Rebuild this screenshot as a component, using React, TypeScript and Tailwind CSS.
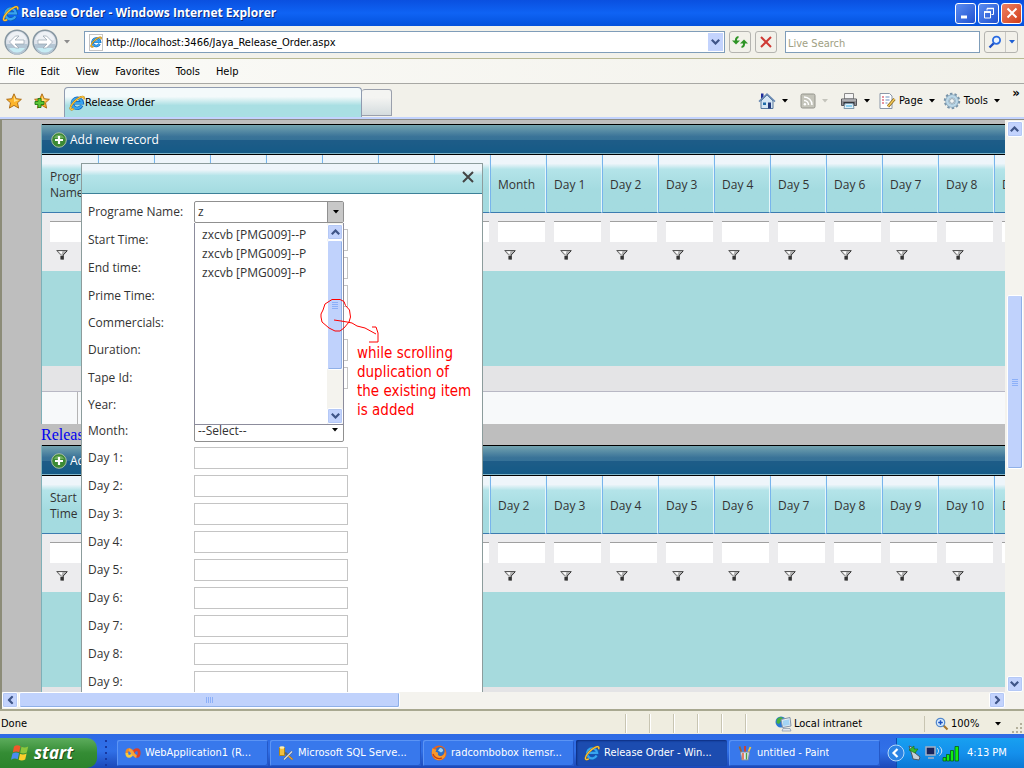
import { useState } from "react";
import type { ReactNode } from "react";
import { clsx } from "clsx";

const MENUS = ["File", "Edit", "View", "Favorites", "Tools", "Help"];

const DAYS = [1, 2, 3, 4, 5, 6, 7, 8, 9, 10, 11].map(n => `Day ${n}`);

const PROGRAM_COLUMNS = [
  "Programe Name", "Start Time", "End time", "Prime Time", "Comm.", "Dur.", "Tape Id", "Year", "Month",
  ...DAYS.slice(0, 9),
];

const RELEASE_COLUMNS = [
  "Start Time", "End time", "Prime Time", "Comm.", "Dur.", "Year", "Month",
  ...DAYS,
];

const ITEMS = ["zxcvb [PMG009]--P", "zxcvb [PMG009]--P", "zxcvb [PMG009]--P"];

type Kind = "combo" | "select" | "text";

const FIELDS: { label: string; kind: Kind }[] = [
  { label: "Programe Name", kind: "combo" },
  { label: "Start Time", kind: "text" },
  { label: "End time", kind: "text" },
  { label: "Prime Time", kind: "text" },
  { label: "Commercials", kind: "select" },
  { label: "Duration", kind: "text" },
  { label: "Tape Id", kind: "text" },
  { label: "Year", kind: "select" },
  { label: "Month", kind: "select" },
  ...DAYS.slice(0, 9).map(label => ({ label, kind: "text" as Kind })),
];

/* ── Icons ── */

function IeIcon({ className = "size-4" }: { className?: string }) {
  return (
    <svg viewBox="0 0 16 16" className={clsx("shrink-0", className)} fill="none">
      <path d="M12.8 10.6a5 5 0 1 1 .5-2.9H5" stroke="#0b5fb8" strokeWidth="3.4" />
      <path d="M12.6 10.6a5 5 0 1 1 .5-2.7H5" stroke="#38a4ee" strokeWidth="2.2" />
      <path d="M14.6 4.2c.8-2.2-.4-3.4-3.2-2C7 4.2 1.8 9.6 1.4 13c-.2 1.8 1.4 2 3.4.8" stroke="#a8740c" strokeWidth="1.9" />
      <path d="M14.6 4.2c.8-2.2-.4-3.4-3.2-2C7 4.2 1.8 9.6 1.4 13c-.2 1.8 1.4 2 3.4.8" stroke="#fbc43c" strokeWidth="1.2" />
    </svg>
  );
}

function Caret({ className = "text-black" }: { className?: string }) {
  return (
    <svg viewBox="0 0 6 4" className={clsx("h-1 w-1.5 shrink-0", className)} fill="currentColor">
      <path d="M0 0h6L3 3.5z" />
    </svg>
  );
}

function Chevron({ dir }: { dir: "up" | "down" | "left" | "right" }) {
  const turn = { up: "", down: "rotate-180", left: "-rotate-90", right: "rotate-90" }[dir];
  return (
    <svg viewBox="0 0 9 6" className={clsx("h-1.5 w-[9px]", turn)} fill="none" stroke="#3f5588" strokeWidth="2.2">
      <path d="M.8 5.2 4.5 1.5l3.7 3.7" />
    </svg>
  );
}

function Funnel() {
  return (
    <svg viewBox="0 0 12 10" className="h-2.5 w-3">
      <path d="M.5.5h11L7.5 4.8V9.500h-3V4.8z" fill="#b0b0b0" />
      <path d="M.5.5h11" stroke="#555" />
      <path d="M11 1 7.200 5v4.500" fill="none" stroke="#333" />
      <path d="M1 1l3.500 3.800" fill="none" stroke="#777" />
      <path d="M4.500 6h3v3.500h-3z" fill="#333" />
      <path d="M2.500 1.200h4L5.500 4.500z" fill="#fff" />
    </svg>
  );
}

function PlusCircle() {
  return (
    <svg viewBox="0 0 16 16" className="size-4">
      <circle cx="8" cy="8" r="7.3" fill="#3c8a34" stroke="#a9bfa4" />
      <path d="M3 6a5.500 5.500 0 0 1 10 0z" fill="#6fae5e" />
      <path d="M8 4v8M4 8h8" stroke="#fff" strokeWidth="2.2" />
    </svg>
  );
}

const STAR = "M8 .8l2.2 4.900 5.200.6-3.900 3.500 1.100 5.300L8 12.400l-4.600 2.700 1.100-5.300L.6 6.300l5.200-.6z";

function StarIcon({ plus = false }: { plus?: boolean }) {
  return (
    <svg viewBox="0 0 16 16" className="size-4">
      <path d={STAR} fill="#fdb52a" stroke="#a8650f" strokeWidth=".9" />
      <path d="M8 2.8l1.500 3.600 3.500.5L8 9z" fill="#ffe08a" />
      {plus && <path d="M4 5.5h3v3h3v3H7v3H4v-3H1v-3h3z" fill="#5cc736" stroke="#1f7a16" strokeWidth=".9" />}
    </svg>
  );
}

function ArrowDisc({ flip = false }: { flip?: boolean }) {
  return (
    <svg viewBox="0 0 26 26" className={clsx("size-[26px]", flip && "-scale-x-100")}>
      <circle cx="13" cy="13" r="11.8" fill="#dde2ea" stroke="#8797a2" strokeWidth="1.600" />
      <path d="M2.5 15a10.500 10.500 0 0 0 21 0z" fill="#b4c6d4" />
      <path d="M5 19a9.500 9.500 0 0 0 16 0z" fill="#c6ecf4" />
      <path d="M3.500 11a9.600 9.600 0 0 1 19 0z" fill="#eef1f5" />
      <path d="M5.500 13l6-6H15l-4 4h9v4h-9l4 4h-3.500z" fill="#fff" stroke="#93a1ad" strokeWidth=".7" />
    </svg>
  );
}

function HouseIcon() {
  return (
    <svg viewBox="0 0 18 18" className="size-[18px]">
      <path d="M3 1.500h2.500V6L3 8z" fill="#1c2c9c" />
      <path d="M3 9l6-6 6 6v7.500H3z" fill="#d5e6f4" stroke="#55779c" />
      <path d="M1 9.700 9 2l8 7.700" fill="none" stroke="#6c8cb4" strokeWidth="1.600" />
      <path d="M10 10.500h3v6h-3z" fill="#223a7c" />
      <path d="M5 10.500h3v2.500H5z" fill="#1f6ba8" />
    </svg>
  );
}

function RssIcon() {
  return (
    <svg viewBox="0 0 16 16" className="size-4" fill="none">
      <rect x="1" y="1" width="14" height="14" rx="1.500" fill="#c4c4ba" stroke="#94948c" />
      <path d="M4 4c4.500 0 8 3.500 8 8M4 7.500A4.500 4.500 0 0 1 8.500 12" stroke="#fff" strokeWidth="1.500" />
      <circle cx="4.900" cy="11.200" r="1.200" fill="#fff" />
    </svg>
  );
}

function PrinterIcon() {
  return (
    <svg viewBox="0 0 18 18" className="size-[18px]">
      <path d="M4.500 1.500h9V7h-9z" fill="#f4f4f4" stroke="#8a8a8a" />
      <path d="M1.500 7h15v6.500h-15z" fill="#8f9094" stroke="#55565a" />
      <path d="M2 8h14" stroke="#cfcfd2" />
      <path d="M3.500 10h11v3h-11z" fill="#34363c" />
      <path d="M5 11.500h8l1 5H4z" fill="#dff0fa" stroke="#7d99ab" />
      <path d="M6 13.500h6v1H6z" fill="#37b0e4" />
    </svg>
  );
}

function PageIcon() {
  return (
    <svg viewBox="0 0 18 18" className="size-[18px]" fill="none">
      <path d="M2 1.500h9.500L14 4v12.500H2z" fill="#fff" stroke="#8a97a8" />
      <path d="M4 5h2M4 8h2M4 11h2" stroke="#e07080" strokeWidth="1.500" />
      <path d="M7.500 5h4M7.500 8h4M7.500 11h2" stroke="#6b8fbf" />
      <path d="M16.500 7 10 14.500" stroke="#7c5a10" strokeWidth="2.800" />
      <path d="M16.500 7 10 14.500" stroke="#f4c95a" strokeWidth="1.600" />
    </svg>
  );
}

function GearIcon() {
  return (
    <svg viewBox="0 0 18 18" className="size-[18px]" fill="none">
      <circle cx="9" cy="9" r="7" stroke="#7893a8" strokeWidth="2.400" strokeDasharray="2.400 2" />
      <circle cx="9" cy="9" r="4.800" stroke="#8aa8bc" strokeWidth="3.800" />
      <circle cx="9" cy="9" r="4.800" stroke="#bcd8e8" strokeWidth="2.400" />
      <circle cx="9" cy="9" r="2.400" fill="#f4f6f4" stroke="#7893a8" strokeWidth=".8" />
    </svg>
  );
}

function MagnifierIcon({ plus = false }: { plus?: boolean }) {
  return plus ? (
    <svg viewBox="0 0 14 14" className="size-3.5" fill="none">
      <path d="M8.500 8.500l4 4" stroke="#a8762c" strokeWidth="2.200" />
      <circle cx="5.500" cy="5.500" r="4.200" fill="#dcefff" stroke="#5388cc" strokeWidth="1.300" />
      <path d="M5.500 3.200v4.600M3.200 5.500h4.600" stroke="#1a4fc0" strokeWidth="1.500" />
    </svg>
  ) : (
    <svg viewBox="0 0 14 14" className="size-3.5" fill="none">
      <path d="M6 8l-4.500 4.500" stroke="#1d4fc4" strokeWidth="2.400" />
      <circle cx="8.500" cy="5.200" r="3.600" fill="#eaf4ff" stroke="#2a6be0" strokeWidth="1.800" />
    </svg>
  );
}

function WindowsFlag() {
  return (
    <svg viewBox="0 0 20 20" className="size-5">
      <path d="M4 3.500C6 2 8.500 2 10.500 3.200L9.200 9.200C7 8 5 8.200 2.800 9.500z" fill="#f0582a" />
      <path d="M11.500 3.700c2 1 4.200 1 6.700-.3l-1.400 6c-2.300 1.300-4.500 1.200-6.600.3z" fill="#8cc63c" />
      <path d="M2.500 10.600c2.200-1.300 4.300-1.400 6.500-.3l-1.300 6C5.500 15.200 3.400 15.400 1 16.700z" fill="#4a8cf0" />
      <path d="M10 10.800c2 1 4.200 1 6.600-.3l-1.400 6c-2.300 1.300-4.500 1.200-6.500.3z" fill="#fbce2c" />
    </svg>
  );
}

function StudioIcon() {
  return (
    <svg viewBox="0 0 16 16" className="size-4" fill="none" strokeWidth="2.800">
      <path d="M8 8c2.200 4.500 6.200 4.500 6.200 0S10.200 3.500 8 8" stroke="#d8402c" />
      <path d="M1.800 8c0-4.500 4-4.500 6.200 0" stroke="#f08a24" />
      <path d="M1.800 8c0 4.500 4 4.500 6.200 0" stroke="#f7cb3c" />
      <path d="M4 4.500c2 .5 4.500 6.500 7.500 7" stroke="#f6a43c" />
    </svg>
  );
}

function SqlIcon() {
  return (
    <svg viewBox="0 0 16 16" className="size-4" fill="none">
      <path d="M1.500 2.500h5v8h-5z" fill="#f4c13c" stroke="#b0851c" />
      <ellipse cx="4" cy="2.500" rx="2.500" ry="1.300" fill="#fff0b0" />
      <path d="M6 14.500l8-8M7 7.500l7.500 7" stroke="#5c6470" strokeWidth="2.200" />
      <path d="M6 14.500l8-8" stroke="#dfe4ea" strokeWidth="1.100" />
      <path d="M10.500 11l4 3.500" stroke="#e8a02c" strokeWidth="1.500" />
    </svg>
  );
}

function FirefoxIcon() {
  return (
    <svg viewBox="0 0 16 16" className="size-4">
      <circle cx="8" cy="8" r="7.500" fill="#e4641c" />
      <circle cx="9" cy="6.500" r="4.600" fill="#2b6fc8" />
      <path d="M9 3c2 0 3 1 3.200 3L10 7.500 7 5.500z" fill="#9ed4f4" />
      <path d="M1.500 3c1 1.500 2.500 1.500 4 1.500L4.500 7c1.500 0 3 .5 2.500 1.800C6.500 10 8 11.500 10.500 11c2-.4 3.300-2.500 3.500-5 2 4.500-1 9-6 9S-.5 9.500 1.500 3z" fill="#f7992c" />
      <path d="M2 9c1 3.500 5 5.500 9 4" fill="none" stroke="#c43c14" strokeWidth="1.200" />
    </svg>
  );
}

function PaintIcon() {
  return (
    <svg viewBox="0 0 16 16" className="size-4" fill="none">
      <path d="M5 9 2.500 1.500" stroke="#a0622c" strokeWidth="1.800" />
      <path d="M8 9V1" stroke="#d83c2c" strokeWidth="1.800" />
      <path d="M10.500 9l3-7" stroke="#f4c83c" strokeWidth="1.800" />
      <path d="M3.500 7h9l-1.200 8h-6.600z" fill="#e0e4ee" stroke="#7888a4" />
      <path d="M6 8v6.500" stroke="#e0542c" strokeWidth="1.400" />
      <path d="M9.500 8v6.500" stroke="#48a444" strokeWidth="1.400" />
    </svg>
  );
}

function IntranetIcon() {
  return (
    <svg viewBox="0 0 17 16" className="h-4 w-[17px]">
      <circle cx="6" cy="6" r="5.500" fill="#2a78d4" />
      <path d="M2 3c2-2.500 5-2 6-1L6 5 4 8 1.500 7z" fill="#48b03c" />
      <path d="M6 3.500 15 1.500l1 8.500-8.500 1.500z" fill="#e8eef4" stroke="#8494a8" />
      <path d="M7.500 4.700l6.500-1.400.8 5.700-6.500 1z" fill="#a4d4f4" />
      <path d="M8 12.500h7l1 2.500H7z" fill="#e4e8ee" stroke="#8494a8" strokeWidth=".7" />
    </svg>
  );
}

/* ── Browser chrome ── */

function TitleBar() {
  const box = "flex size-[21px] items-center justify-center rounded-[3px] border border-white";
  return (
    <header className="flex h-[26px] shrink-0 items-center bg-linear-to-b from-[#0a50e0] via-[#0f63f4] to-[#0452dc] px-0.5">
      <IeIcon className="size-[17px]" />
      <h1 className="ml-0.5 flex-1 truncate font-['Open_Sans',sans-serif] text-[12px] font-bold text-white [text-shadow:1px_1px_#0a2a80]">
        Release Order - Windows Internet Explorer
      </h1>
      <div className="flex gap-0.5">
        <button aria-label="Minimize" className={clsx(box, "bg-linear-to-br from-[#5c8cf0] to-[#2050d0]")}>
          <svg viewBox="0 0 12 12" className="size-3"><path d="M1 8.500h6v3H1z" fill="#fff" /></svg>
        </button>
        <button aria-label="Restore" className={clsx(box, "bg-linear-to-br from-[#5c8cf0] to-[#2050d0]")}>
          <svg viewBox="0 0 12 12" className="size-3" fill="none" stroke="#fff">
            <path d="M4 3.500V1.500h6.500v6H8.500" /><path d="M4 1.500h7" strokeWidth="1.500" />
            <path d="M1.500 5h6v6h-6z" /><path d="M1 5h7" strokeWidth="1.800" />
          </svg>
        </button>
        <button aria-label="Close" className={clsx(box, "bg-linear-to-br from-[#f08060] to-[#d03c14]")}>
          <svg viewBox="0 0 12 12" className="size-3" stroke="#fff" strokeWidth="2"><path d="M1.500 1.500l9 9M10.500 1.500l-9 9" /></svg>
        </button>
      </div>
    </header>
  );
}

function NavBar() {
  return (
    <div className="flex h-[33px] shrink-0 items-center border-b border-[#b9b994] bg-[#f2f1ea] pr-1.5 pl-1">
      <div className="flex gap-0.5">
        <button aria-label="Back"><ArrowDisc /></button>
        <button aria-label="Forward"><ArrowDisc flip /></button>
      </div>
      <button aria-label="Recent pages" className="ml-1.5"><Caret className="text-[#8c8c8c]" /></button>
      <div className="ml-3.5 flex h-[22px] flex-1 items-center border border-[#7f9db9] bg-white pr-px pl-1">
        <span className="flex h-[17px] w-3.5 items-center justify-center border border-[#c4c4c4] bg-white"><IeIcon className="size-3" /></span>
        <input
          aria-label="Address"
          defaultValue="http://localhost:3466/Jaya_Release_Order.aspx"
          className="ml-[3px] min-w-0 flex-1 pt-0.5 outline-none"
        />
        <button aria-label="Show addresses" className="flex h-[18px] w-[15px] items-center justify-center bg-[#c3d3fd]"><Chevron dir="down" /></button>
      </div>
      <div className="ml-1 flex gap-1">
        <button aria-label="Refresh" className="flex size-[22px] items-center justify-center rounded-[3px] border border-[#b4b4b0]">
          <svg viewBox="0 0 16 14" className="h-3.5 w-4" fill="#2e9426">
            <path d="M0 5.500h8L4 9.500z" /><path d="M3 6V4.500C3 3 4 1.500 6.500 1v2C5.500 3.300 5 4 5 5v1z" />
            <path d="M8 8.500h8l-4-4z" /><path d="M13 8v1.500c0 1.500-1 3-3.500 3.500v-2C10.500 10.700 11 10 11 9V8z" />
          </svg>
        </button>
        <button aria-label="Stop" className="flex size-[22px] items-center justify-center rounded-[3px] border border-[#b4b4b0]">
          <svg viewBox="0 0 12 12" className="size-3" stroke="#cf3a34" strokeWidth="2"><path d="M1 1l10 10M11 1 1 11" /></svg>
        </button>
      </div>
      <input
        type="search"
        aria-label="Live Search"
        placeholder="Live Search"
        className="ml-2 h-[22px] w-[195px] border border-[#7f9db9] bg-white px-0.5 pt-0.5 outline-none placeholder:text-[#a0a084]"
      />
      <div className="ml-1 flex h-[22px] items-center rounded-[3px] border border-[#b4b4b0]">
        <button aria-label="Search" className="flex h-full w-5 items-center justify-center"><MagnifierIcon /></button>
        <button aria-label="Search options" className="flex h-full w-3 items-center justify-center border-l border-[#c8c8c4]"><Caret className="text-[#1d5fd4]" /></button>
      </div>
    </div>
  );
}

function MenuBar() {
  return (
    <nav className="flex h-[25px] shrink-0 items-center gap-4 border-b border-[#a8a8a4] bg-linear-to-r from-[#fbfbf8] to-[#f2f1ea] pt-0.5 pl-2">
      {MENUS.map(m => <button key={m}>{m}</button>)}
    </nav>
  );
}

function Tool({ icon, label, name, dim }: { icon: ReactNode; label?: string; name: string; dim?: boolean }) {
  return (
    <button aria-label={name} className="flex items-center gap-1">
      {icon}
      {label && <span className="-ml-px">{label}</span>}
      <span className="ml-0.5"><Caret className={dim ? "text-[#c4c4bc]" : "text-black"} /></span>
    </button>
  );
}

function TabBar() {
  return (
    <div className="flex h-9 shrink-0 flex-col bg-[#f2f1ea]">
      <div className="flex h-[33px] items-end pl-1.5">
        <div className="flex gap-3 self-center">
          <button aria-label="Favorites Center"><StarIcon /></button>
          <button aria-label="Add to Favorites"><StarIcon plus /></button>
        </div>
        <button className="ml-3.5 flex h-[30px] w-[298px] items-center rounded-t-[4px] border border-b-0 border-[#8f9bb0] bg-linear-to-b from-[#f4fafb] from-30% to-[#a9dfe3] to-60% pl-1">
          <IeIcon />
          <span>Release Order</span>
        </button>
        <button aria-label="New Tab" className="mb-px h-[27px] w-[30px] rounded-t-[3px] border border-l-0 border-[#9aa0ac] bg-linear-to-b from-[#f4f4f2] from-30% to-[#d4dcde]" />
        <div className="flex flex-1 items-center justify-end gap-2 self-center">
          <div className="flex gap-3">
            <Tool name="Home" icon={<HouseIcon />} />
            <Tool name="Feeds" dim icon={<RssIcon />} />
            <Tool name="Print" icon={<PrinterIcon />} />
          </div>
          <Tool name="Page" label="Page" icon={<PageIcon />} />
          <Tool name="Tools" label="Tools" icon={<GearIcon />} />
          <button aria-label="More commands" className="mb-4 w-4 text-center text-[13px] leading-4 font-bold">»</button>
        </div>
      </div>
      <div className="h-[3px] border-b border-[#8c8c84] bg-[#c3d3fd]" />
    </div>
  );
}

/* ── Page content ── */

function Grid({ columns, children }: { columns: string[]; children?: ReactNode }) {
  return (
    <section className="border-l border-[#7fb0b8] font-['Open_Sans',sans-serif] text-[12px] text-[#333]">
      <div className="flex h-[31px] items-center border-y border-black bg-linear-to-b from-[#74a4b0] via-[#3a7398] via-40% to-[#1d6c94] pl-[9px] shadow-[inset_0_-1px_#7fb4c8,inset_0_-14px_#0c4c7c90]">
        <button className="flex items-center gap-[3px] text-white"><PlusCircle />Add new record</button>
      </div>
      <table className="w-[1008px] table-fixed border-separate border-spacing-0">
        <thead>
          <tr>
            {columns.map(c => (
              <th
                key={c}
                scope="col"
                className="h-[58px] w-14 overflow-hidden border-r border-b border-l border-r-[#e4f6fa] border-b-[#3c7cb0] border-l-[#78b4ec] bg-linear-to-b from-[#eef5fa] from-15% via-[#b4e4e9] via-25% to-[#a4dbe0] to-60% pt-0.5 pl-[7px] text-left leading-4 font-normal first:border-l-0 first:pl-2"
              >
                {c}
              </th>
            ))}
          </tr>
        </thead>
        <tbody>
          <tr className="bg-[#ececee]">
            {columns.map(c => (
              <td key={c} className="h-[58px] pl-2 align-top">
                <input aria-label={`Filter ${c}`} className="mt-2 block h-[21px] w-[47px] border-t border-[#a0a0a0] bg-white px-1 outline-none" />
                <button aria-label={`Filter options for ${c}`} className="mt-2 ml-1.5 block"><Funnel /></button>
              </td>
            ))}
          </tr>
        </tbody>
      </table>
      <div className="h-[95px] bg-[#a6dadd]" />
      {children}
    </section>
  );
}

function ScrollButton({ dir }: { dir: "up" | "down" | "left" | "right" }) {
  return (
    <button aria-label={`Scroll ${dir}`} className="flex size-4 shrink-0 items-center justify-center rounded-[2px] border border-white bg-[#c3d3fd] shadow-[0_0_0_1px_#b4c8f6_inset]">
      <Chevron dir={dir} />
    </button>
  );
}

function Thumb({ across = false, className }: { across?: boolean; className: string }) {
  return (
    <div className={clsx("flex items-center justify-center rounded-[2px] border border-white bg-[#c0d2fc] shadow-[inset_-1px_-1px_#8fb0e8]", className)}>
      <div className={clsx("flex gap-px", !across && "flex-col")}>
        {[0, 1, 2, 3].map(i => <span key={i} className={clsx("bg-[#8cb0f8]", across ? "h-1.5 w-px" : "h-px w-1.5")} />)}
      </div>
    </div>
  );
}

function Combo({ id }: { id: string }) {
  const [value, setValue] = useState("z");
  const [open, setOpen] = useState(true);
  return (
    <div className="relative w-[150px]">
      <div className="flex h-[22px] rounded-[2px] border border-[#909090] bg-white">
        <input id={id} value={value} onChange={e => setValue(e.target.value)} className="min-w-0 flex-1 px-[3px] outline-none" />
        <button type="button" aria-label="Toggle list" onClick={() => setOpen(!open)} className="flex w-4 items-center justify-center border-l border-[#909090] bg-[#c8c8c8]">
          <Caret />
        </button>
      </div>
      {open && (
        <div className="absolute top-full left-0 z-10 flex h-[202px] w-full border border-t-0 border-[#8c8c9c] bg-white">
          <ul className="flex-1 pt-0.5">
            {ITEMS.map((item, i) => (
              <li key={i} className="h-[19px] pl-[7px] leading-[19px] whitespace-nowrap">{item}</li>
            ))}
          </ul>
          <div className="flex w-4 flex-col bg-[#f4f3ee] pt-px">
            <ScrollButton dir="up" />
            <Thumb className="h-[130px]" />
            <div className="flex-1" />
            <ScrollButton dir="down" />
          </div>
        </div>
      )}
    </div>
  );
}

function RecordDialog() {
  return (
    <div role="dialog" aria-label="Add new record" className="absolute top-[43px] left-[79px] h-[540px] w-[402px] border border-[#8c9c9c] bg-white font-['Open_Sans',sans-serif] text-[12px] text-[#333]">
      <div className="mb-1 flex h-[30px] items-center justify-end border-b border-[#3c8098] bg-linear-to-b from-[#eef5fa] from-20% via-[#b4e4e9] via-40% to-[#a4dbe0] pr-2">
        <button aria-label="Close" className="pb-1">
          <svg viewBox="0 0 12 12" className="size-3" stroke="#444" strokeWidth="2"><path d="M1 1l10 10M11 1 1 11" /></svg>
        </button>
      </div>
      <form className="flex flex-col pl-1.5">
        {FIELDS.map(({ label, kind }) => {
          const id = label.toLowerCase().replace(" ", "-");
          return (
            <div key={id} className={clsx("flex shrink-0 items-center", kind === "select" ? "h-[26px]" : "h-7")}>
              <label htmlFor={id} className="w-[106px]">{label}:</label>
              {kind === "combo" && <Combo id={id} />}
              {kind === "text" && <input id={id} className="h-[22px] w-[154px] border border-[#c4c4c4] px-1 outline-none" />}
              {kind === "select" && (
                <div className="relative">
                  <select id={id} className="h-[22px] w-[150px] appearance-none rounded-[2px] border border-[#909090] bg-white pl-[3px] outline-none">
                    <option>--Select--</option>
                  </select>
                  <span className="pointer-events-none absolute top-2 right-1.5 flex"><Caret /></span>
                </div>
              )}
            </div>
          );
        })}
      </form>

      {/* red pen note */}
      <svg viewBox="0 0 64 50" className="absolute top-[131px] left-[237px] z-20 h-[50px] w-16" fill="none" stroke="#f00">
        <path d="M13 4.500h8l4 2 1.500 4 4 4.500 1 7-1.500 5-5 6-4 3h-5l-6-3-7-6-1-5v-3l2-4 2-6z" />
        <path d="M15 25l7 1 6 1 5 1 5 3 8 2 11 6M53 32h4l2 6v9h-9" />
      </svg>
      <p className="absolute top-[180px] left-[275px] z-20 font-['DejaVu_Sans_Condensed','DejaVu_Sans',sans-serif] text-[15px] leading-[19px] font-extralight whitespace-nowrap text-[#f00]">
        while scrolling<br />duplication of<br />the existing item<br />is added
      </p>
    </div>
  );
}

function Viewport() {
  return (
    <main className="flex min-h-0 flex-1 border-l-2 border-[#8c8c78] bg-[#f4f3ee]">
      <div className="flex min-w-0 flex-1 flex-col">
        <div className="relative min-h-0 flex-1 overflow-hidden bg-[#bebebe] pt-1 pl-[39px]">
          <Grid columns={PROGRAM_COLUMNS}>
            <div className="h-[26px] border-b border-[#b8b8c4] bg-[#e4e4e6]" />
            <div className="h-8 bg-[#f7f9fa]"><div className="h-full w-9 border-r border-[#b4b4b4]" /></div>
          </Grid>
          <a href="#release" className="block h-[21px] font-['Liberation_Serif',serif] text-[16px] leading-[21px] text-[#0000f0]">Release Order</a>
          <Grid columns={RELEASE_COLUMNS}>
            <div className="h-[26px] bg-[#e4e4e6]" />
          </Grid>
          <RecordDialog />
        </div>
        <div className="flex h-[17px] shrink-0">
          <ScrollButton dir="left" />
          <Thumb across className="ml-px h-4 w-[38%]" />
          <div className="flex-1" />
          <ScrollButton dir="right" />
        </div>
      </div>
      <div className="flex w-[19px] flex-col items-center pt-px pb-[17px]">
        <ScrollButton dir="up" />
        <div className="h-[158px]" />
        <Thumb className="h-[174px] w-4" />
        <div className="flex-1" />
        <ScrollButton dir="down" />
      </div>
    </main>
  );
}

/* ── Status bar and taskbar ── */

function StatusBar() {
  return (
    <footer className="flex h-[25px] shrink-0 items-center border-t-2 border-[#a8a890] bg-[#efede0] pt-0.5">
      <span className="flex-1 pl-px">Done</span>
      <div className="flex h-[19px]">
        {[0, 1, 2, 3, 4, 5].map(i => <span key={i} className="w-6 border-l border-[#c8c5b2] shadow-[inset_1px_0_#fff]" />)}
      </div>
      <div className="flex w-[155px] items-center gap-0.5 pl-1.5"><IntranetIcon />Local intranet</div>
      <button className="flex w-[87px] items-center gap-0.5 border-l border-[#c8c5b2] pl-2.5">
        <MagnifierIcon plus />100%<span className="ml-3.5"><Caret /></span>
      </button>
      <svg viewBox="0 0 12 12" className="mr-px size-3 self-end" fill="#b4b09c">
        <path d="M9 9h2v2H9zM5 9h2v2H5zM1 9h2v2H1zM9 5h2v2H9zM5 5h2v2H5zM9 1h2v2H9z" />
      </svg>
    </footer>
  );
}

const TASKS = [
  { label: "WebApplication1 (R...", icon: <StudioIcon /> },
  { label: "Microsoft SQL Serve...", icon: <SqlIcon /> },
  { label: "radcombobox itemsr...", icon: <FirefoxIcon /> },
  { label: "Release Order - Win...", icon: <IeIcon />, active: true },
  { label: "untitled - Paint", icon: <PaintIcon /> },
];

function Taskbar() {
  return (
    <div className="flex h-[34px] shrink-0 bg-linear-to-b from-[#2e6ae4] via-[#3070e8] to-[#1c48b8] pt-1 text-white">
      <button className="flex w-[97px] items-center gap-1 rounded-r-[10px] bg-linear-to-b from-[#5cac5c] via-[#348c34] to-[#2c842c] pl-2.5 font-['Open_Sans',sans-serif] text-[17px] leading-5 font-bold italic [text-shadow:1px_1px_#1c4c1c]">
        <WindowsFlag />start
      </button>
      <div className="mx-2 grid w-1 content-center gap-1">
        {[0, 1, 2, 3, 4].map(i => <span key={i} className="size-0.5 bg-[#1838a0]" />)}
      </div>
      <div className="flex min-w-0 flex-1 gap-0.5">
        {TASKS.map(t => (
          <button
            key={t.label}
            className={clsx(
              "my-0.5 flex w-[151px] min-w-0 items-center gap-1 rounded-[2px] pl-2",
              t.active ? "bg-[#1c4cb0] shadow-[inset_1px_1px_2px_#0c2c80]" : "bg-[#3878ec] shadow-[inset_1px_1px_#5c94f4,inset_-1px_-1px_#2458c8]"
            )}
          >
            {t.icon}
            <span className="truncate">{t.label}</span>
          </button>
        ))}
      </div>
      <div className="flex w-[128px] items-center border-l border-[#0c4cb0] bg-linear-to-b from-[#18a0f0] via-[#1490ec] to-[#0c78d4]">
        <button aria-label="Show hidden icons" className="-ml-2.5">
          <svg viewBox="0 0 18 18" className="size-[18px]" fill="none">
            <circle cx="9" cy="9" r="8" fill="#2c84e4" stroke="#b4d8fa" />
            <path d="M10.500 5 6.500 9l4 4" stroke="#fff" strokeWidth="2.200" />
          </svg>
        </button>
        <svg viewBox="0 0 52 18" className="ml-0.5 h-[18px] w-[52px]" fill="none">
          <path d="M2 2l5 2 1 5 5 4-1 3-6-1-1-4z" fill="#c8d0d8" stroke="#505860" />
          <path d="M2 6 7 2v3h4L8 9z" fill="#38b830" stroke="#146c14" strokeWidth=".6" />
          <path d="M19 3h9v8h-9zM21 14h6" fill="#18245c" stroke="#a4b0c4" strokeWidth="1.500" />
          <path d="M30 4c2 2 2 4 0 6M32.500 2.500c3 3 3 6 0 9" stroke="#d8e4f4" />
          <path d="M36 13.500h3V17h-3zM39.500 10.500h3V17h-3zM43.500 6.500h3V17h-3zM48 2.500h3.500V17H48z" fill="#10f010" stroke="#085c18" strokeWidth=".8" />
        </svg>
        <time className="ml-2 whitespace-nowrap">4:13 PM</time>
      </div>
    </div>
  );
}

export default function App() {
  return (
    <div className="flex h-screen w-full flex-col overflow-hidden bg-[#ece9d8] font-['DejaVu_Sans_Condensed','DejaVu_Sans',sans-serif] text-[11px] leading-4 text-black">
      <TitleBar />
      <NavBar />
      <MenuBar />
      <TabBar />
      <Viewport />
      <StatusBar />
      <Taskbar />
    </div>
  );
}
